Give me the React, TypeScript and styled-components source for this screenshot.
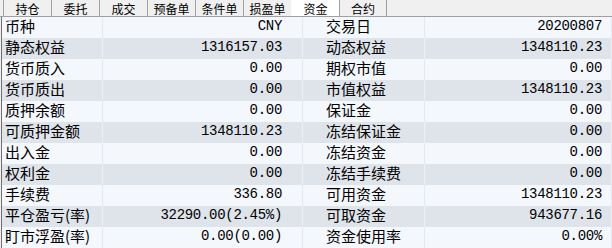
import React from "react";
import styled, { createGlobalStyle } from "styled-components";

const Global = createGlobalStyle`
  html, body { margin: 0; padding: 0; background: #ffffff; }
  body { font-family: "Noto Sans CJK SC", "Noto Sans", sans-serif; }
`;

const Frame = styled.div`
  width: 612px;
  height: 248px;
  overflow: hidden;
  background: #f0f0f0;
`;

const TabBar = styled.div`
  display: flex;
  height: 16px;
  padding-left: 3px;
  background: #f0f0f0;
  border-bottom: 1px solid #a0a0a0;
`;

const Tab = styled.div<{ $active?: boolean }>`
  width: 48px;
  height: 16px;
  box-sizing: border-box;
  border-left: 1px solid ${(p) => (p.$active ? "#ffffff" : "#a0a0a0")};
  background: ${(p) => (p.$active ? "#ffffff" : "#f0f0f0")};
  font-family: "Noto Sans CJK SC", sans-serif;
  font-size: 12px;
  line-height: 17px;
  text-align: center;
  color: #000;
  &:last-child {
    border-right: 1px solid #a0a0a0;
  }
`;

const Table = styled.div`
  display: grid;
  grid-template-columns: 101px 200px 122px 1fr;
  margin-left: 1px;
  border-left: 1px solid #707070;
`;

const Cell = styled.div<{ $even: boolean; $value?: boolean; $pr?: number; $pl?: number }>`
  height: 21px;
  box-sizing: border-box;
  display: flex;
  align-items: flex-start;
  justify-content: ${(p) => (p.$value ? "flex-end" : "flex-start")};
  background: ${(p) => (p.$even ? "#dfe3ea" : "#f4f7fc")};
  border-right: 1px solid ${(p) => (p.$even ? "#eceff4" : "#e3e7ee")};
  color: #000;
  white-space: nowrap;
  padding-left: ${(p) => p.$pl ?? 0}px;
  padding-right: ${(p) => p.$pr ?? 0}px;
  font-family: ${(p) =>
    p.$value ? '"Liberation Mono", monospace' : '"Noto Sans CJK SC", sans-serif'};
  font-size: ${(p) => (p.$value ? "14px" : "15px")};
  letter-spacing: ${(p) => (p.$value ? "-0.3px" : "0")};
  line-height: ${(p) => (p.$value ? "19px" : "17px")};
`;

const tabs = ["持仓", "委托", "成交", "预备单", "条件单", "损盈单", "资金", "合约"];

const rows: [string, string, string, string][] = [
  ["币种", "CNY", "交易日", "20200807"],
  ["静态权益", "1316157.03", "动态权益", "1348110.23"],
  ["货币质入", "0.00", "期权市值", "0.00"],
  ["货币质出", "0.00", "市值权益", "1348110.23"],
  ["质押余额", "0.00", "保证金", "0.00"],
  ["可质押金额", "1348110.23", "冻结保证金", "0.00"],
  ["出入金", "0.00", "冻结资金", "0.00"],
  ["权利金", "0.00", "冻结手续费", "0.00"],
  ["手续费", "336.80", "可用资金", "1348110.23"],
  ["平仓盈亏(率)", "32290.00(2.45%)", "可取资金", "943677.16"],
  ["盯市浮盈(率)", "0.00(0.00)", "资金使用率", "0.00%"],
];

export default function App() {
  return (
    <Frame>
      <Global />
      <TabBar>
        {tabs.map((t) => (
          <Tab key={t} $active={t === "资金"}>
            {t}
          </Tab>
        ))}
      </TabBar>
      <Table>
        {rows.map((r, i) => {
          const even = i % 2 === 1;
          return (
            <React.Fragment key={i}>
              <Cell $even={even} $pl={3}>{r[0]}</Cell>
              <Cell $even={even} $value $pr={20}>{r[1]}</Cell>
              <Cell $even={even} $pl={23}>{r[2]}</Cell>
              <Cell $even={even} $value $pr={9}>{r[3]}</Cell>
            </React.Fragment>
          );
        })}
      </Table>
    </Frame>
  );
}
